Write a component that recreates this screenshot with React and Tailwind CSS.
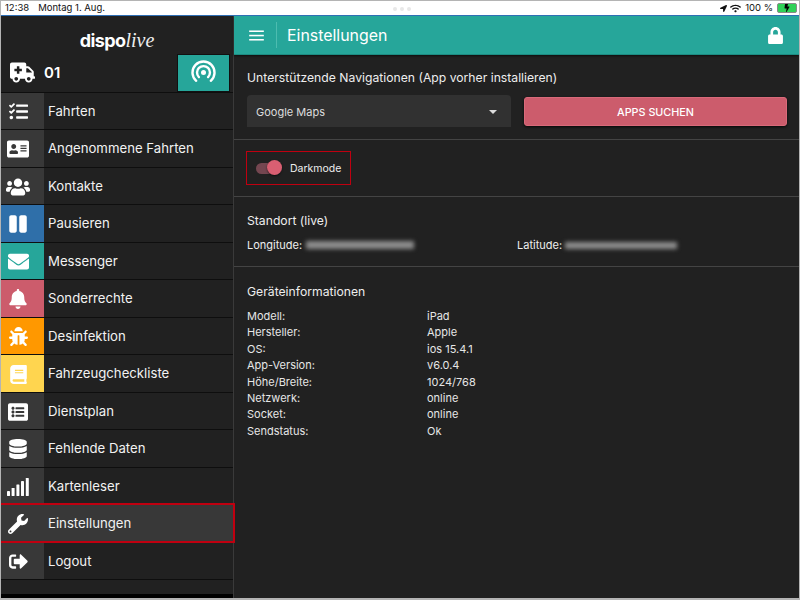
import React from "react";
import { FaAmbulance, FaTasks, FaAddressCard, FaUsers, FaPause, FaEnvelope, FaBell, FaBug, FaBook, FaListAlt, FaDatabase, FaWrench, FaSignOutAlt, FaLock, FaLocationArrow, FaWifi, FaBolt } from "react-icons/fa";

function Signal({ className }) {
  return (
    <svg viewBox="0 0 22 18" className={className} fill="currentColor">
      <rect x="0" y="13" width="3" height="5" rx="0.4" />
      <rect x="4.6" y="10" width="3" height="8" rx="0.4" />
      <rect x="9.4" y="6.5" width="3" height="11.5" rx="0.4" />
      <rect x="14" y="3" width="3" height="15" rx="0.4" />
      <rect x="18.8" y="0" width="3" height="18" rx="0.4" />
    </svg>
  );
}

const items = [
  ["Fahrten", FaTasks, "bg-[#383838]", "text-[19px]"],
  ["Angenommene Fahrten", FaAddressCard, "bg-[#383838]", "text-[22px]"],
  ["Kontakte", FaUsers, "bg-[#383838]", "text-[24px]"],
  ["Pausieren", FaPause, "bg-[#2f6fa9]", "text-[20px]"],
  ["Messenger", FaEnvelope, "bg-[#26a69a]", "text-[21px]"],
  ["Sonderrechte", FaBell, "bg-[#cc5c6c]", "text-[20px]"],
  ["Desinfektion", FaBug, "bg-[#ff9800]", "text-[19px]"],
  ["Fahrzeugcheckliste", FaBook, "bg-[#ffd54f]", "text-[19px]"],
  ["Dienstplan", FaListAlt, "bg-[#383838]", "text-[20px]"],
  ["Fehlende Daten", FaDatabase, "bg-[#383838]", "text-[20px]"],
  ["Kartenleser", Signal, "bg-[#383838]", "w-[22px] h-[18px]"],
  ["Einstellungen", FaWrench, "bg-[#383838]", "text-[20px]"],
  ["Logout", FaSignOutAlt, "bg-[#383838]", "text-[19px]"],
];

const info = [
  ["Modell:", "iPad"],
  ["Hersteller:", "Apple"],
  ["OS:", "ios 15.4.1"],
  ["App-Version:", "v6.0.4"],
  ["Höhe/Breite:", "1024/768"],
  ["Netzwerk:", "online"],
  ["Socket:", "online"],
  ["Sendstatus:", "Ok"],
];

function Row({ label, Icon, bg, size }) {
  const active = label === "Einstellungen";
  return (
    <div
      className={
        active
          ? "relative z-10 -mr-[2px] -mt-[2px] flex h-[39.5px] rounded-r-[1px] border-y-2 border-r-2 border-[#c00010] bg-[#383838]"
          : "flex h-[37.5px] border-b border-[#0e0e0e]"
      }
    >
      <div className={"flex w-[43px] shrink-0 items-center justify-center pr-[9px] pt-[2px] text-white " + bg}>
        <Icon className={size} />
      </div>
      <div className="flex flex-1 items-center pl-[4px] pt-[2px] text-[13.2px] text-[#f2f2f2]">{label}</div>
    </div>
  );
}

export default function App() {
  return (
    <div className="flex h-[600px] w-[800px] flex-col overflow-hidden border-x border-t border-b-2 border-[#b4b4b4] bg-white font-['Inter','Liberation_Sans',sans-serif]">
      <div className="relative flex h-[14px] shrink-0 items-center justify-between border-b border-[#2f6fb5] bg-white pl-[4px] pr-[2px] text-[9.5px] text-[#111] box-content">
        <div className="flex gap-[9px]">
          <span>12:38</span>
          <span>Montag 1. Aug.</span>
        </div>
        <div className="absolute left-[392px] top-[6px] flex gap-[3px]">
          <span className="h-[4px] w-[4px] rounded-full bg-[#e8e8e8]" />
          <span className="h-[4px] w-[4px] rounded-full bg-[#e8e8e8]" />
          <span className="h-[4px] w-[4px] rounded-full bg-[#e8e8e8]" />
        </div>
        <div className="flex items-center gap-[3px]">
          <FaLocationArrow className="text-[7px]" />
          <FaWifi className="text-[11px]" />
          <span className="ml-[1px]">100 %</span>
          <div className="relative ml-[1px] flex h-[10px] w-[20px] items-center justify-center rounded-[2px] border border-[#8a8a8a] bg-[#2fd158]">
            <FaBolt className="text-[8px] text-black" />
          </div>
        </div>
      </div>
      <div className="flex min-h-0 flex-1">
        <aside className="flex w-[233px] shrink-0 flex-col border-r border-[#3a3a3a] bg-[#212121]">
          <div className="flex h-[38px] shrink-0 items-end justify-center pb-[4px] text-white">
            <span className="text-[18px] font-bold leading-none tracking-[-0.6px]">dispo</span>
            <span className="font-['Liberation_Serif',serif] text-[20px] italic leading-none text-[#eee]">live</span>
          </div>
          <div className="flex h-[38.5px] shrink-0 items-stretch justify-between border-b border-[#0e0e0e] pr-[3px]">
            <div className="flex items-center pl-[9px] text-white">
              <FaAmbulance className="text-[25px]" />
              <span className="ml-[9px] text-[15px] font-semibold">01</span>
            </div>
            <div className="flex w-[53px] items-center justify-center border border-[#111] bg-[#26a69a]">
              <svg viewBox="0 0 24 24" className="h-[25px] w-[25px]" fill="none" stroke="white" strokeWidth="2.3" strokeLinecap="round">
                <circle cx="12" cy="12" r="2.4" fill="white" stroke="none" />
                <path d="M7.6 16.4a6.2 6.2 0 1 1 8.8 0" />
                <path d="M5 20a10.6 10.6 0 1 1 14 0" />
              </svg>
            </div>
          </div>
          {items.map(([label, Icon, bg, size]) => (
            <Row key={label} label={label} Icon={Icon} bg={bg} size={size} />
          ))}
          <div className="min-h-0 flex-1 bg-[#212121]" />
          <div className="h-[4px] shrink-0 bg-black" />
        </aside>
        <main className="flex min-w-0 flex-1 flex-col bg-[#212121] text-[#eee]">
          <header className="flex h-[39px] shrink-0 items-center border-b border-[#1c8c82] bg-[#26a69a] text-white shadow-[0_1px_2px_rgba(0,0,0,0.6)]">
            <div className="flex h-[26px] w-[43px] shrink-0 items-center justify-center border-r border-[#4dbcb0] pl-[3px]">
              <svg viewBox="0 0 16 12" className="h-[11px] w-[15px]" fill="white">
                <rect x="0" y="0.5" width="16" height="1.7" />
                <rect x="0" y="5.2" width="16" height="1.7" />
                <rect x="0" y="9.8" width="16" height="1.7" />
              </svg>
            </div>
            <h1 className="flex-1 pl-[10px] pt-[1px] text-[15.9px]">Einstellungen</h1>
            <FaLock className="mr-[15px] text-[17px]" />
          </header>
          <section className="h-[85px] shrink-0 border-b border-[#444] pl-[13px] pr-[11px] pt-[15px]">
            <h2 className="text-[12.2px] leading-[16px] text-[#eee]">Unterstützende Navigationen (App vorher installieren)</h2>
            <div className="mt-[9px] flex gap-[13px]">
              <div className="flex h-[32px] w-[264px] shrink-0 items-center justify-between rounded-t-[4px] bg-[#313131] pl-[9px] pr-[14px] pt-[2px] text-[11px] text-[#ddd]">
                Google Maps
                <span className="h-0 w-0 border-x-[4.5px] border-t-[4.5px] border-x-transparent border-t-[#ddd]" />
              </div>
              <button className="mt-[2px] flex h-[29px] w-[263px] shrink-0 items-center justify-center rounded-[3px] border border-[#d96a7a] bg-[#cc5c6c] pt-[4px] text-[10.8px] font-medium text-[#fff] shadow-[0_1px_3px_rgba(0,0,0,0.8)]">
                APPS SUCHEN
              </button>
            </div>
          </section>
          <section className="h-[57px] shrink-0 border-b border-[#444] pl-[12px] pt-[11px]">
            <div className="flex h-[34px] w-[105px] items-center border border-[#c00010] pl-[9px]">
              <div className="relative h-[11px] w-[26px] rounded-full bg-[#744650]">
                <span className="absolute -top-[2.5px] right-0 h-[15px] w-[15px] rounded-full bg-[#d95f72] shadow-[0_1px_2px_rgba(0,0,0,0.6)]" />
              </div>
              <span className="ml-[8px] pt-[1px] text-[10.5px] text-[#eee]">Darkmode</span>
            </div>
          </section>
          <section className="h-[70px] shrink-0 border-b border-[#444] px-[13px] pt-[16px]">
            <h2 className="text-[12.2px] leading-[16px]">Standort (live)</h2>
            <div className="mt-[8px] flex text-[11px] leading-[16px]">
              <div className="flex w-[270px] items-center">
                <span>Longitude:</span>
                <span className="ml-[4px] h-[8px] w-[108px] bg-[#8c8c8c] blur-[2px]" />
              </div>
              <div className="flex items-center">
                <span>Latitude:</span>
                <span className="ml-[3px] h-[7px] w-[112px] bg-[#8c8c8c] blur-[2px]" />
              </div>
            </div>
          </section>
          <section className="px-[13px] pt-[17px]">
            <h2 className="text-[12.2px] leading-[16px]">Geräteinformationen</h2>
            <div className="mt-[8px] grid grid-cols-[180px_1fr] text-[11px] leading-[16.4px] text-[#e6e6e6]">
              {info.map(([k, v]) => (
                <React.Fragment key={k}>
                  <span>{k}</span>
                  <span>{v}</span>
                </React.Fragment>
              ))}
            </div>
          </section>
        </main>
      </div>
    </div>
  );
}
